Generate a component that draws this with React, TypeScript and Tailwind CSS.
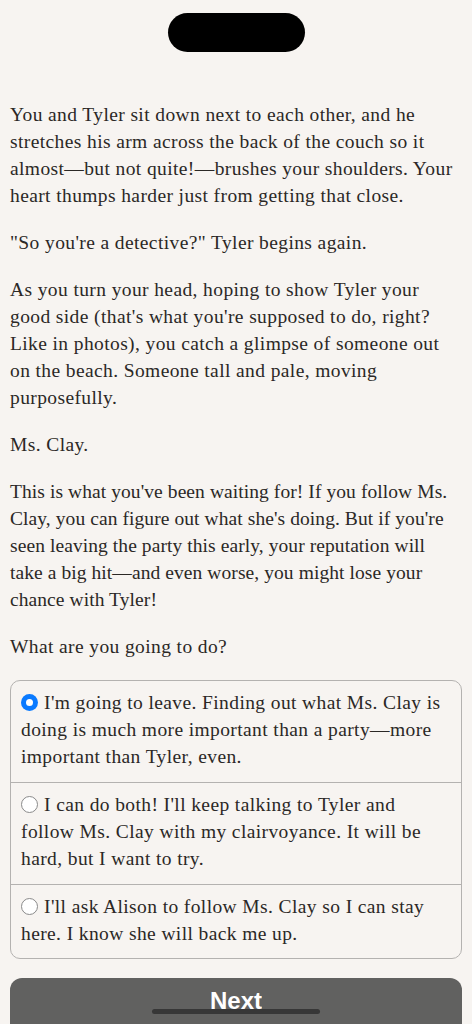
import React from "react";

type Para = { text: string; tight?: boolean };

const paragraphs: Para[] = [
  {
    text: "You and Tyler sit down next to each other, and he stretches his arm across the back of the couch so it almost\u2014but not quite!\u2014brushes your shoulders. Your heart thumps harder just from getting that close.",
  },
  { text: "\"So you're a detective?\" Tyler begins again." },
  {
    text: "As you turn your head, hoping to show Tyler your good side (that's what you're supposed to do, right? Like in photos), you catch a glimpse of someone out on the beach. Someone tall and pale, moving purposefully.",
  },
  { text: "Ms. Clay." },
  {
    text: "This is what you've been waiting for! If you follow Ms. Clay, you can figure out what she's doing. But if you're seen leaving the party this early, your reputation will take a big hit\u2014and even worse, you might lose your chance with Tyler!",
    tight: true,
  },
  { text: "What are you going to do?" },
];

const choices = [
  "I'm going to leave. Finding out what Ms. Clay is doing is much more important than a party\u2014more important than Tyler, even.",
  "I can do both! I'll keep talking to Tyler and follow Ms. Clay with my clairvoyance. It will be hard, but I want to try.",
  "I'll ask Alison to follow Ms. Clay so I can stay here. I know she will back me up.",
];

function Radio({ checked }: { checked: boolean }) {
  if (checked) {
    return (
      <span className="inline-block align-[-2px] w-[17px] h-[17px] rounded-full bg-[#0a7aff] relative mr-[6px]">
        <span className="absolute left-[5px] top-[5px] w-[7px] h-[7px] rounded-full bg-white" />
      </span>
    );
  }
  return (
    <span className="inline-block align-[-2px] w-[17px] h-[17px] rounded-full border border-[#8a8a8a] bg-white mr-[6px]" />
  );
}

export default function App() {
  return (
    <div className="relative w-[472px] h-[1024px] overflow-hidden bg-[#f7f4f1] text-[#2b2826] font-['Liberation_Serif',serif]">
      <div className="flex justify-center pt-[13px]">
        <div className="w-[137px] h-[39px] rounded-full bg-black" />
      </div>

      <div className="px-[10px] pt-[49px] text-[19.5px] leading-[27px] tracking-[0.02em]">
        {paragraphs.map((p, i) => (
          <p key={i} className={`mb-[20px] ${p.tight ? "tracking-[0.004em]" : ""}`}>
            {p.text}
          </p>
        ))}

        <div className="border border-[#b4b2b0] rounded-[10px]">
          {choices.map((c, i) => (
            <div
              key={i}
              className={`pl-[10px] pr-[8px] pt-[8px] ${i === 2 ? "pb-[11px]" : "pb-[12px]"} ${
                i > 0 ? "border-t border-[#b4b2b0]" : ""
              }`}
            >
              <Radio checked={i === 0} />
              {c}
            </div>
          ))}
        </div>

        <button className="mt-[19px] w-full h-[60px] rounded-[12px] bg-[#616160] text-white flex justify-center items-start pt-[9px]">
          <span className="block h-[22px] overflow-hidden text-[24px] leading-[28px] font-bold tracking-normal font-['Liberation_Sans',sans-serif]">
            Next
          </span>
        </button>
      </div>

      <div className="absolute left-[152px] top-[1009px] w-[168px] h-[5px] rounded-full bg-[#373737]" />
    </div>
  );
}
